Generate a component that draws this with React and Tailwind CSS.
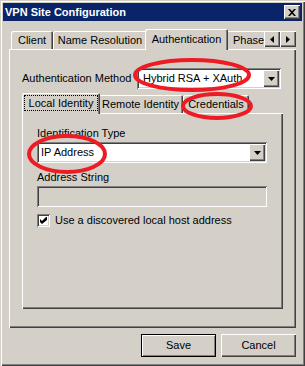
import React from "react";

// classic 3D edges
const raised =
  "shadow-[inset_1px_1px_#ffffff,inset_-1px_-1px_#404040,inset_-2px_-2px_#808080]";
const sunken =
  "shadow-[inset_1px_1px_#808080,inset_-1px_-1px_#ffffff,inset_2px_2px_#404040,inset_-2px_-2px_#d4d0c8]";

function Tab({ width, children }) {
  return (
    <div
      className={`flex h-[18px] shrink-0 items-center justify-center rounded-t-[2px] shadow-[inset_1px_1px_#ffffff,inset_-1px_0_#404040,inset_-2px_0_#808080] ${width}`}
    >
      {children}
    </div>
  );
}

function SelectedTab({ width, children }) {
  return (
    <div
      className={`relative z-10 -mx-[2px] -mb-[1px] flex h-[21px] shrink-0 items-center justify-center rounded-t-[2px] bg-[#d4d0c8] shadow-[inset_1px_1px_#ffffff,inset_-1px_0_#404040,inset_-2px_0_#808080] ${width}`}
    >
      {children}
    </div>
  );
}

function DropButton() {
  return (
    <div className={`mr-[2px] ml-auto flex h-[17px] w-[16px] items-center justify-center bg-[#d4d0c8] ${raised}`}>
      <svg width="7" height="4" viewBox="0 0 7 4">
        <polygon points="0,0 7,0 3.5,4" fill="#000" />
      </svg>
    </div>
  );
}

export default function App() {
  return (
    <div className="relative h-[366px] w-[305px] overflow-hidden bg-[#d4d0c8] p-[3px] font-['Liberation_Sans',Arial,sans-serif] text-[11px] leading-[13px] text-black shadow-[inset_1px_1px_#d4d0c8,inset_2px_2px_#ffffff,inset_-1px_-1px_#404040,inset_-2px_-2px_#808080]">
      {/* title bar */}
      <div className="flex h-[18px] items-center justify-between bg-[#0a246a] pl-[2px]">
        <span className="font-bold text-white">VPN Site Configuration</span>
        <div className={`mr-[2px] flex h-[14px] w-[16px] items-center justify-center bg-[#d4d0c8] ${raised}`}>
          <svg width="8" height="7" viewBox="0 0 8 7">
            <path d="M0 0h2l2 2.3 2-2.3h2l-3 3.5 3 3.5h-2l-2-2.3-2 2.3h-2l3-3.5z" fill="#000" />
          </svg>
        </div>
      </div>

      <div className="px-[6px] pt-[8px]">
        {/* tab strip */}
        <div className="flex h-[20px] items-end pl-[2px]">
          <Tab width="w-[42px]">Client</Tab>
          <Tab width="w-[94px]">Name Resolution</Tab>
          <SelectedTab width="w-[83px]">Authentication</SelectedTab>
          <div className="w-[38px] shrink-0 overflow-hidden">
            <div className="flex h-[18px] w-[60px] items-center rounded-t-[2px] pl-[7px] shadow-[inset_1px_1px_#ffffff]">
              Phase
            </div>
          </div>
          <div className="mb-[2px] flex">
            <div className={`flex h-[16px] w-[16px] items-center justify-center bg-[#d4d0c8] ${raised}`}>
              <svg width="4" height="7" viewBox="0 0 4 7">
                <polygon points="4,0 0,3.5 4,7" fill="#000" />
              </svg>
            </div>
            <div className={`flex h-[16px] w-[16px] items-center justify-center bg-[#d4d0c8] ${raised}`}>
              <svg width="4" height="7" viewBox="0 0 4 7">
                <polygon points="0,0 4,3.5 0,7" fill="#000" />
              </svg>
            </div>
          </div>
        </div>

        {/* page */}
        <div className={`h-[279px] px-[13px] pt-[19px] ${raised}`}>
          <div className="flex items-center justify-between pr-[2px]">
            <span>Authentication Method</span>
            <div className={`flex h-[21px] w-[144px] items-center bg-white pl-[6px] ${sunken}`}>
              <span>Hybrid RSA + XAuth</span>
              <DropButton />
            </div>
          </div>

          <div className="mt-[4px] flex h-[20px] items-end pl-[2px]">
            <SelectedTab width="w-[78px]">
              <div className="mx-[2px] mt-[2px] mb-[3px] flex h-[16px] flex-1 items-center justify-center border border-dotted border-black">
                Local Identity
              </div>
            </SelectedTab>
            <Tab width="w-[85px]">Remote Identity</Tab>
            <Tab width="w-[66px]">Credentials</Tab>
          </div>

          <div className={`h-[196px] pr-[16px] pl-[15px] pt-[14px] ${raised}`}>
            <div>Identification Type</div>
            <div className={`mt-[2px] flex h-[21px] items-center bg-white pl-[4px] ${sunken}`}>
              <span>IP Address</span>
              <DropButton />
            </div>
            <div className="mt-[8px]">Address String</div>
            <div className={`mt-[2px] h-[21px] bg-[#d4d0c8] ${sunken}`} />
            <div className="mt-[7px] flex items-center gap-[5px]">
              <div className={`flex h-[13px] w-[13px] items-center justify-center bg-white ${sunken}`}>
                <svg width="7" height="7" viewBox="0 0 7 7">
                  <polygon points="0,2 2,4 6,0 7,0 7,3 2,7 0,5" fill="#000" />
                </svg>
              </div>
              <span>Use a discovered local host address</span>
            </div>
          </div>
        </div>

        {/* buttons */}
        <div className="mt-[6px] flex justify-end gap-[5px]">
          <div className="flex h-[23px] w-[75px] items-center justify-center bg-[#d4d0c8] shadow-[inset_0_0_0_1px_#000000,inset_2px_2px_#ffffff,inset_-2px_-2px_#808080]">
            Save
          </div>
          <div className={`flex h-[23px] w-[75px] items-center justify-center bg-[#d4d0c8] ${raised}`}>
            Cancel
          </div>
        </div>
      </div>

      {/* red annotation marks */}
      <svg className="pointer-events-none absolute inset-0" width="305" height="366">
        <ellipse cx="192" cy="75" rx="57" ry="15" fill="none" stroke="#ed1c24" strokeWidth="4" />
        <ellipse cx="217" cy="106" rx="34" ry="12" fill="none" stroke="#ed1c24" strokeWidth="4" />
        <ellipse cx="67" cy="154" rx="38" ry="18" fill="none" stroke="#ed1c24" strokeWidth="4" />
      </svg>
    </div>
  );
}
